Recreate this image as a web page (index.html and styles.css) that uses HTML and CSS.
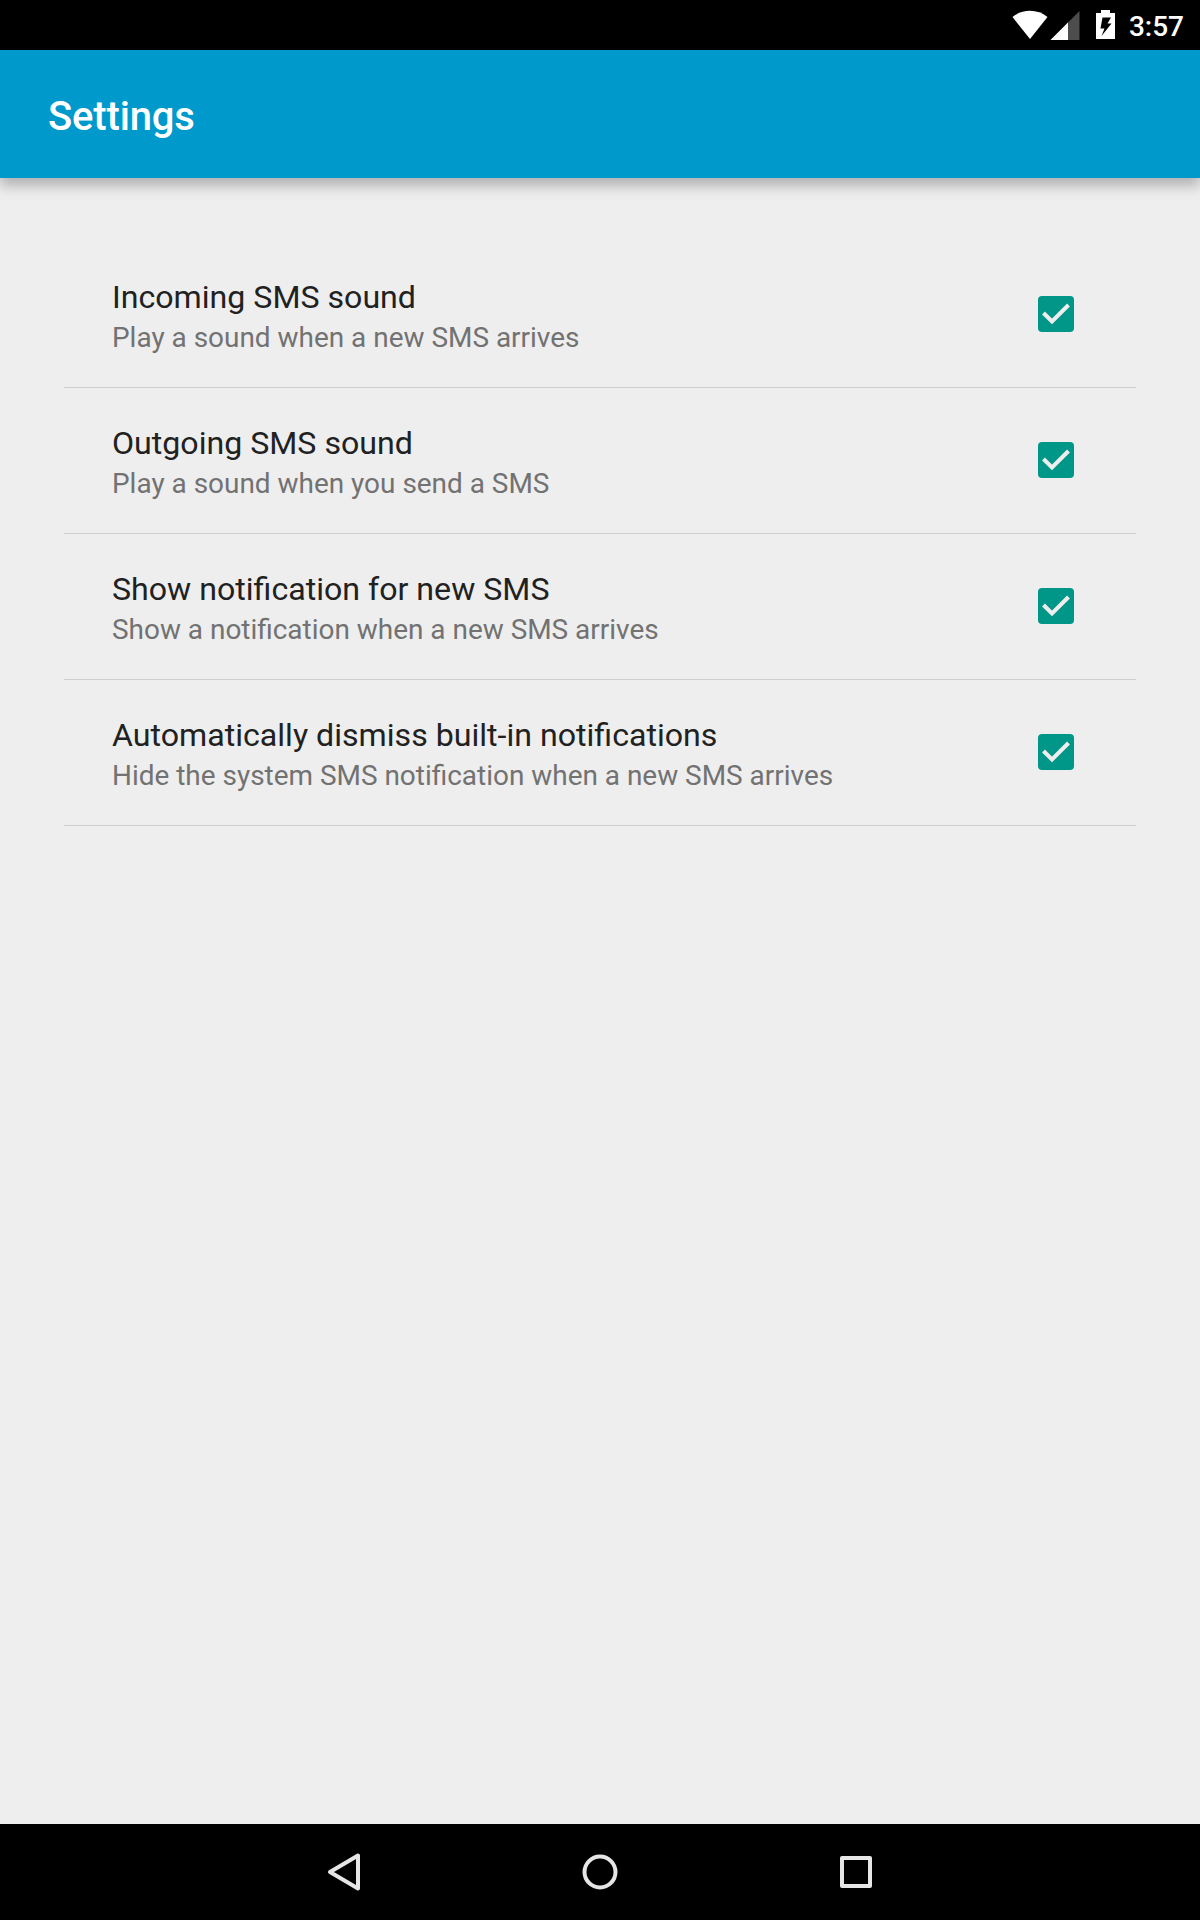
FILE: index.html
```
<!DOCTYPE html>
<html lang="en">
<head>
<meta charset="utf-8">
<title>Settings</title>
<link rel="stylesheet" href="styles.css">
</head>
<body>
<div class="screen">
  <div class="status-bar">
    <svg class="status-icons" width="120" height="50" viewBox="0 0 120 50" aria-hidden="true">
      <path fill="#fff" d="M30 39 12.500 17A28 28 0 0 1 47.500 17Z"/>
      <path fill="#4d4d4d" d="M79.500 11V40H50.500Z"/>
      <path fill="#fff" d="M68 22.500V40H50.500Z"/>
      <path fill="#fff" fill-rule="evenodd" d="M101 10h9v3h5v26h-19V13h5Z M102.500 17.500 100.500 28.500H104.500L101.500 36 111.500 23.500H107.500L111 17.500Z"/>
    </svg>
    <span class="clock">3:57</span>
  </div>
  <header class="app-bar"><h1 class="app-title">Settings</h1></header>
  <main class="settings">
    <label class="row">
      <span class="text"><span class="title">Incoming SMS sound</span><span class="summary">Play a sound when a new SMS arrives</span></span>
      <svg class="check" viewBox="0 0 36 36"><rect width="36" height="36" rx="4"/><path d="M5.500 17 14 25.500 30.500 9"/></svg>
    </label>
    <label class="row">
      <span class="text"><span class="title">Outgoing SMS sound</span><span class="summary">Play a sound when you send a SMS</span></span>
      <svg class="check" viewBox="0 0 36 36"><rect width="36" height="36" rx="4"/><path d="M5.500 17 14 25.500 30.500 9"/></svg>
    </label>
    <label class="row">
      <span class="text"><span class="title">Show notification for new SMS</span><span class="summary">Show a notification when a new SMS arrives</span></span>
      <svg class="check" viewBox="0 0 36 36"><rect width="36" height="36" rx="4"/><path d="M5.500 17 14 25.500 30.500 9"/></svg>
    </label>
    <label class="row">
      <span class="text"><span class="title">Automatically dismiss built-in notifications</span><span class="summary">Hide the system SMS notification when a new SMS arrives</span></span>
      <svg class="check" viewBox="0 0 36 36"><rect width="36" height="36" rx="4"/><path d="M5.500 17 14 25.500 30.500 9"/></svg>
    </label>
  </main>
  <nav class="nav-bar">
    <svg class="nav-icon" viewBox="0 0 64 64"><path d="M46 15.500V48.500L18 32Z"/></svg>
    <svg class="nav-icon" viewBox="0 0 64 64"><circle cx="32" cy="32" r="15.500"/></svg>
    <svg class="nav-icon" viewBox="0 0 64 64"><rect x="18" y="18" width="28" height="28"/></svg>
  </nav>
</div>
</body>
</html>
```
FILE: styles.css
```
body {
  margin: 0;
  font-family: Roboto, sans-serif;
  background: #eee;
}

.screen {
  display: flex;
  flex-direction: column;
  width: 1200px;
  height: 1920px;
  background: #eee;
  overflow: hidden;
}

.status-bar {
  display: flex;
  justify-content: flex-end;
  height: 50px;
  padding-right: 16px;
  background: #000;
  color: #fff;
}

.status-icons {
  margin-right: 9px;
}

.clock {
  font-size: 28px;
  font-weight: 500;
  line-height: 53px;
}

.app-bar {
  display: flex;
  align-items: center;
  height: 128px;
  padding: 0 48px;
  background: #0099cc;
  color: #fff;
  box-shadow: 0 8px 12px rgba(0, 0, 0, 0.25);
}

.app-title {
  margin: 0;
  padding-top: 5px;
  font-size: 40px;
  font-weight: 500;
  letter-spacing: -0.15px;
}

.settings {
  flex: 1;
  padding: 64px 64px 0;
}

.row {
  display: flex;
  align-items: center;
  justify-content: space-between;
  height: 145px;
  padding: 0 62px 0 48px;
  border-bottom: 1px solid #cecece;
}

.text {
  display: flex;
  flex-direction: column;
  padding-top: 2px;
}

.title {
  font-size: 32.13px;
  line-height: 43px;
  color: #212121;
}

.summary {
  font-size: 27.94px;
  line-height: 37px;
  color: #727272;
}

.check {
  width: 36px;
  height: 36px;
  margin-bottom: 1px;
}

.check rect {
  fill: #009688;
}

.check path {
  fill: none;
  stroke: #eee;
  stroke-width: 4;
}

.nav-bar {
  display: flex;
  align-items: center;
  justify-content: center;
  gap: 192px;
  height: 96px;
  background: #000;
}

.nav-icon {
  width: 64px;
  height: 64px;
  fill: none;
  stroke: #e6e6e6;
  stroke-width: 4;
  stroke-linejoin: round;
}
```
